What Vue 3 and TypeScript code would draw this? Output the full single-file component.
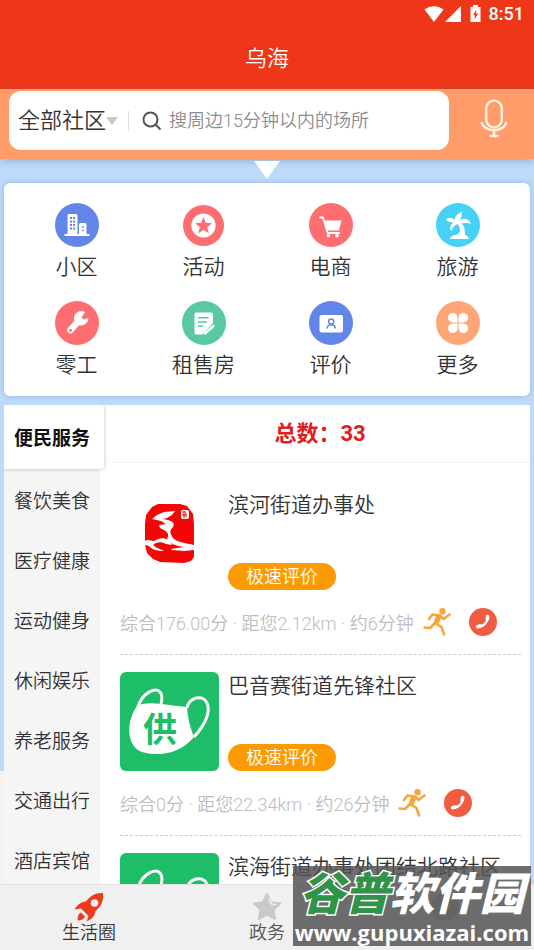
<script setup lang="ts">
interface Service {
  name: string
  icon: string
  color: string
  small?: boolean
}

interface Place {
  name: string
  score: string
  distance: string
  minutes: number
  logo: 'seal' | 'mask'
}

const services: Service[] = [
  { name: '小区', icon: 'building', color: '#6286e8' },
  { name: '活动', icon: 'star', color: '#fe6e71', small: true },
  { name: '电商', icon: 'cart', color: '#fe6e71' },
  { name: '旅游', icon: 'palm', color: '#46d2f6' },
  { name: '零工', icon: 'wrench', color: '#fe6e71' },
  { name: '租售房', icon: 'note', color: '#5ac8a0' },
  { name: '评价', icon: 'card', color: '#6286e8' },
  { name: '更多', icon: 'clover', color: '#fea678' },
]

const categories: string[] = [
  '便民服务', '餐饮美食', '医疗健康', '运动健身', '休闲娱乐', '养老服务', '交通出行', '酒店宾馆',
]

const places: Place[] = [
  { name: '滨河街道办事处', score: '176.00', distance: '2.12', minutes: 6, logo: 'seal' },
  { name: '巴音赛街道先锋社区', score: '0', distance: '22.34', minutes: 26, logo: 'mask' },
  { name: '滨海街道办事处团结北路社区', score: '0', distance: '22.51', minutes: 26, logo: 'mask' },
]
</script>

<template>
  <div class="app">
    <header class="top">
      <div class="status">
        <svg class="wifi" viewBox="0 0 20 16"><path d="M10 16 .5 3.6C6-.9 14-.9 19.500 3.600Z" /></svg>
        <svg class="signal" viewBox="0 0 16 16"><path d="M16 0V16H0Z" /></svg>
        <svg class="battery" viewBox="0 0 11 17">
          <path d="M3 0H8V2H10.500V17H.5V2H3Z" />
          <path d="M6.500 4.500 3 10.200H5L4.500 14.500 8.200 8.500H6Z" fill="#ee3718" />
        </svg>
        <span>8:51</span>
      </div>
      <h1>乌海</h1>
    </header>

    <form class="search-bar" @submit.prevent>
      <div class="search-box">
        <button type="button" class="area">全部社区<i class="caret"></i></button>
        <svg class="lens" viewBox="0 0 20 20"><circle cx="8.500" cy="8.500" r="7" /><path d="m13.500 13.500 5 5" /></svg>
        <input type="search" aria-label="搜索场所" placeholder="搜周边15分钟以内的场所" />
      </div>
      <button type="button" class="voice" aria-label="语音搜索">
        <svg viewBox="0 0 28 40">
          <rect x="6.200" y="1.500" width="15.600" height="27" rx="7.800" />
          <path d="M1.500 23C4 34 24 34 26.500 23M14 31.500V37M9.500 37H18.500" />
        </svg>
      </button>
    </form>

    <main class="content">
      <i class="pointer"></i>

      <nav class="services">
        <a v-for="s in services" :key="s.name" href="#">
          <span class="badge">
            <svg viewBox="0 0 44 44" :class="{ small: s.small }">
              <circle cx="22" cy="22" r="22" :fill="s.color" />
              <g v-if="s.icon === 'building'" fill="#fff">
                <path d="M12.500 12.500Q12.500 11 14 11H21Q22.500 11 22.500 12.500V31H24V21.500Q24 20 25.500 20H30Q31.500 20 31.500 21.500V31H34.500V33H9.500V31H12.500Z" />
                <path d="M15 15h5M15 18.500h5M15 22h5M15 25.500h5" stroke="#6286e8" stroke-width="1.800" stroke-dasharray="2 1" />
                <path d="M26.900 24h1.800M26.900 27.500h1.800" stroke="#6286e8" stroke-width="1.500" />
              </g>
              <g v-else-if="s.icon === 'star'">
                <circle cx="22" cy="22" r="13" fill="#fff" />
                <path d="m22 13 2.500 6.100 6.500.5-5 4.200 1.600 6.400L22 26.700l-5.600 3.500L18 23.800l-5-4.200 6.500-.5Z" :fill="s.color" stroke-linejoin="round" />
              </g>
              <g v-else-if="s.icon === 'cart'">
                <path d="M11 14.500h3l4.700 15.500h11.500" fill="none" stroke="#fff" stroke-width="1.800" stroke-linecap="round" stroke-linejoin="round" />
                <path d="M15 17.500H32.500L30 27.500H18Z" fill="#fff" />
                <circle cx="19.500" cy="32.800" r="1.800" fill="#fff" /><circle cx="28" cy="32.800" r="1.800" fill="#fff" />
              </g>
              <g v-else-if="s.icon === 'palm'" fill="#fff">
                <path d="M20 19C18 16 18 13 26 8.500C26 13 25 16 23 18C28 14 33 16 35 21C31 19.500 28 19.800 25 20.500C28 22 29 25 29 32C31 32.500 32.500 34 33 36H14C14.500 33.500 17 32 20.500 31.800C25 30 25 25 21.500 21C19.500 21.500 17 23.500 15.500 28C13 25 14 22 17.500 20C14 19 12 18.500 9.800 17C12 14 16 14 20 18Z" />
              </g>
              <g v-else-if="s.icon === 'wrench'">
                <path d="m15.500 29 9-10" stroke="#fff" stroke-width="6.500" stroke-linecap="round" />
                <path d="M29.500 11.300A6.800 6.800 0 1 0 33 17.500L28.500 19 25.800 16.600Z" fill="#fff" stroke="#fff" stroke-linejoin="round" />
                <circle cx="15.500" cy="29.200" r="1.500" :fill="s.color" />
              </g>
              <g v-else-if="s.icon === 'note'">
                <path d="M14 11.500H29Q31 11.500 31 13.500V22L20.500 33.500H14Q12.500 33.500 12.500 32V13Q12.500 11.500 14 11.500Z" fill="#fff" />
                <path d="M16 16.800H26.500M16 21H25M16 25.200H21" stroke="#5ac8a0" stroke-width="1.600" />
                <path d="m23 32.500 8.500-7.500" stroke="#fff" stroke-width="2.400" stroke-linecap="round" />
              </g>
              <g v-else-if="s.icon === 'card'">
                <rect x="10.500" y="14" width="23.500" height="17.500" rx="2" fill="#fff" />
                <circle cx="22.200" cy="20.500" r="2.600" fill="none" :stroke="s.color" stroke-width="1.500" />
                <path d="M18 27.500Q18.500 23.800 22.200 23.800Q26 23.800 26.500 27.500" fill="none" :stroke="s.color" stroke-width="1.500" />
              </g>
              <g v-else fill="#fff">
                <path d="M21.500 21.500H16.700A4.800 4.800 0 1 1 21.500 16.700ZM22.500 21.500V16.700A4.800 4.800 0 1 1 27.300 21.500ZM21.500 22.500V27.300A4.800 4.800 0 1 1 16.700 22.500ZM22.500 22.500H27.300A4.800 4.800 0 1 1 22.500 27.300Z" />
              </g>
            </svg>
          </span>
          <span class="name">{{ s.name }}</span>
        </a>
      </nav>

      <section class="directory">
        <nav class="categories">
          <button v-for="(c, i) in categories" :key="c" type="button" :class="{ active: i === 0 }">{{ c }}</button>
        </nav>
        <div class="results">
          <h2>总数：33</h2>
          <ul>
            <li v-for="p in places" :key="p.name">
              <div class="summary">
                <svg v-if="p.logo === 'seal'" class="logo" viewBox="0 0 99 99">
                  <path d="M26 24 32 16 38 13H60L67 15 73 23 74 33V66L71 70 64 72 40 71 33 68 27 62 25 54V33Z" fill="#f30606" />
                  <path d="M32 28 37 24 44 21 55 20 52 24 47 27 43 28C50 29 56 31 53 36C49 40 50 42 53 47C56 51 66 52 74 54V59L64 60 52 59 51 58 64 56C56 55 48 52 47 48C50 43 47 40 40 37L39 34 46 33 41 30Z" fill="#fff" />
                  <path d="M25 50C30 47 32 52 36 49C43 45 49 48 52 54L46 53C41 50 36 51 33 54C36 57 41 58 44 60C38 60 32 59 29 55L25 54Z" fill="#fff" />
                  <path d="M36 54Q41 52 45 55L40 56Z" fill="#f30606" />
                  <rect x="61" y="19" width="8" height="9" rx="2" fill="#fff" />
                  <path d="M62 21h4M64 20v7M62 24h4M66 22v4" stroke="#f30606" stroke-width="1" />
                </svg>
                <svg v-else class="logo" viewBox="0 0 99 99">
                  <rect width="99" height="99" rx="6" fill="#1ebd67" />
                  <path d="M17 34C29 28 48 34 67 35Q68 51 74 65C58 84 35 84 22 80C6 74 6 49 17 34Z" fill="#fff" />
                  <path d="M18 35C22 21 35 15 40 20C43 23 42 28 41 32M67 36C69 25 83 22 87 31C92 43 82 56 74 65" fill="none" stroke="#fff" stroke-width="3" />
                  <text x="40" y="70" text-anchor="middle" class="mask-word">供</text>
                </svg>
                <div class="info">
                  <h3>{{ p.name }}</h3>
                  <button type="button" class="rate">极速评价</button>
                </div>
              </div>
              <div class="meta">
                <span>综合{{ p.score }}分 · 距您{{ p.distance }}km · 约{{ p.minutes }}分钟</span>
                <a href="#" aria-label="路线">
                  <svg viewBox="0 0 28 28">
                    <circle cx="19.500" cy="3.200" r="3.200" fill="#f6a63c" />
                    <path d="M6 11 9.500 6.500 17 7.500 20.500 11 26.500 6.500M15.500 8.500 11.500 15.500 7 20 1.500 19.500M12.500 15.500 18.500 19 21 26.300" fill="none" stroke="#f6a63c" stroke-width="2.600" stroke-linecap="round" stroke-linejoin="round" />
                    <path d="M13 7.500 18.500 9.500 15 17 10.500 15Z" fill="#f6a63c" />
                  </svg>
                </a>
                <a href="#" aria-label="电话">
                  <svg viewBox="0 0 28 28">
                    <circle cx="14" cy="14" r="14" fill="#f05c42" />
                    <path d="M9 19.200C14 18.500 18 15 18.700 9.500" fill="none" stroke="#fff" stroke-width="2.200" />
                    <path d="m8.500 18.700 2.800-.6M18.300 11.200 18.700 8.600" stroke="#fff" stroke-width="3.600" stroke-linecap="round" />
                  </svg>
                </a>
              </div>
            </li>
          </ul>
        </div>
      </section>
    </main>

    <nav class="tabs">
      <a href="#" class="current">
        <svg viewBox="0 0 30 30">
          <path d="M29 1C22 .5 16 4 12 9.500C7 10 3 13 .5 17.500L7 16.500 14.500 24 12.500 29.500C18 27 21 24 21.500 19C27 15 30 8 29 1Z" fill="#ed3b1c" />
          <circle cx="20.500" cy="11" r="3.800" fill="#f0f0f0" />
          <path d="M7 20.500C4 22 4 24.500 3.500 28.500C7 28.500 9.500 27.500 11 24.500Z" fill="#ed3b1c" />
        </svg>
        <span>生活圈</span>
      </a>
      <a href="#">
        <svg viewBox="0 0 30 30">
          <path d="m15 2 4 8.300 9.200 1.200-6.700 6.400 1.700 9.100L15 22.600 6.800 27l1.700-9.100-6.700-6.400 9.200-1.200Z" fill="#c9c9c9" stroke="#c9c9c9" stroke-width="2" stroke-linejoin="round" />
          <path d="m17 7 2.500 5 4 .8" fill="none" stroke="#f0f0f0" stroke-width="1.600" stroke-linecap="round" />
        </svg>
        <span>政务</span>
      </a>
      <a href="#" aria-label="我的">
        <svg viewBox="0 0 30 30"><circle cx="15" cy="15" r="14" fill="#c9c9c9" /></svg>
      </a>
    </nav>

    <aside class="watermark">
      <strong><em>谷普</em>软件园</strong>
      <span>www.gupuxiazai.com</span>
    </aside>
  </div>
</template>

<style>
body {
  margin: 0;
}
</style>

<style scoped>
.app {
  position: relative;
  display: flex;
  flex-direction: column;
  height: 100vh;
  overflow: hidden;
  font-family: Roboto, "Noto Sans CJK SC", sans-serif;
  font-weight: 350;
  color: #333;
}

.app * {
  box-sizing: border-box;
}

svg {
  display: block;
  flex: none;
}

button,
input {
  padding: 0;
  border: 0;
  background: none;
  color: inherit;
  font: inherit;
}

a {
  color: inherit;
  text-decoration: none;
}

h1,
h2,
h3,
ul {
  margin: 0;
  padding: 0;
  font-weight: inherit;
  list-style: none;
}

.top {
  flex: none;
  height: 89px;
  background: #ee3718;
  color: #fff;
}

.status {
  display: flex;
  align-items: center;
  justify-content: flex-end;
  height: 27px;
  padding-right: 10px;
  font-size: 18px;
  font-weight: 500;
}

.status svg {
  fill: #fff;
}

.wifi {
  width: 20px;
  height: 16px;
  margin-right: 1px;
}

.signal {
  width: 16px;
  height: 16px;
  margin-right: 9px;
}

.battery {
  width: 11px;
  height: 17px;
  margin-right: 8px;
}

h1 {
  font-size: 22px;
  line-height: 64px;
  text-align: center;
}

.search-bar {
  position: relative;
  z-index: 1;
  display: flex;
  flex: none;
  height: 70px;
  padding: 2px 0 9px 9px;
  background: #ff9c6a;
  box-shadow: 0 2px 8px rgba(80, 110, 150, 0.4);
}

.search-box {
  display: flex;
  flex: 1;
  align-items: center;
  min-width: 0;
  padding-left: 9px;
  border-radius: 12px;
  background: #fff;
}

.area {
  display: flex;
  align-items: center;
  padding-right: 10px;
  border-right: 1px solid #ddd;
  font-size: 22px;
  line-height: 20px;
}

.caret {
  border: 6px solid transparent;
  border-top: 8px solid #c8c8c8;
  border-bottom: 0;
}

.lens {
  width: 20px;
  height: 20px;
  margin: 0 7px 0 13px;
  fill: none;
  stroke: #555;
  stroke-width: 2;
}

.search-box input {
  flex: 1;
  min-width: 0;
  outline: 0;
  font-size: 18px;
}

.search-box input::placeholder {
  color: #8c8c8c;
  opacity: 1;
}

.voice {
  display: flex;
  justify-content: center;
  width: 85px;
  padding: 8px 0 0 4px;
}

.voice svg {
  width: 28px;
  height: 40px;
  fill: none;
  stroke: #fff0e0;
  stroke-width: 2.500;
}

.content {
  display: flex;
  flex: 1;
  flex-direction: column;
  min-height: 0;
  padding: 2px 4px 0;
  background: linear-gradient(#f4f3f0, #f4f3f0) left bottom / 50% 113px no-repeat, #bedafa;
}

.pointer {
  position: relative;
  z-index: 2;
  flex: none;
  align-self: center;
  margin-bottom: 4px;
  border: 13px solid transparent;
  border-top: 18px solid #fff;
  border-bottom: 0;
}

.services {
  display: grid;
  flex: none;
  grid-template-columns: repeat(4, 1fr);
  grid-auto-rows: 98px;
  padding: 20px 9px 0;
  height: 213px;
  margin-bottom: 9px;
  border-radius: 6px;
  background: #fff;
  box-shadow: 0 0 5px rgba(90, 120, 170, 0.4);
}

.services a {
  display: flex;
  flex-direction: column;
  align-items: center;
}

.badge {
  display: flex;
  align-items: center;
  height: 44px;
}

.badge svg {
  width: 44px;
  height: 44px;
}

.badge svg.small {
  width: 41px;
  height: 41px;
}

.name {
  font-size: 21px;
  line-height: 40px;
}

.directory {
  display: flex;
  flex: 1;
  min-height: 0;
  overflow: hidden;
  background: #fff;
}

.categories {
  display: flex;
  flex: none;
  flex-direction: column;
  width: 96px;
  background: #f5f5f5;
}

.categories button {
  flex: none;
  height: 60px;
  font-size: 19px;
}

.categories .active {
  width: 100px;
  height: 64px;
  padding: 0 4px 2px 0;
  border-radius: 0 3px 3px 0;
  background: #fff;
  box-shadow: 0 0 4px rgba(0, 0, 0, 0.25);
  color: #111;
  font-weight: 700;
}

.results {
  flex: 1;
  min-width: 0;
  padding-left: 10px;
}

h2 {
  height: 58px;
  border-bottom: 1px solid #f2f2f2;
  color: #e01d22;
  font-size: 22px;
  font-weight: 700;
  line-height: 57px;
  text-align: center;
}

ul {
  padding: 11px 9px 0 10px;
}

li {
  padding-top: 17px;
  border-bottom: 1px dashed #ccc;
}

.summary {
  display: flex;
  gap: 9px;
}

.logo {
  width: 99px;
  height: 99px;
}

.mask-word {
  fill: #1ebd67;
  font-size: 34px;
  font-weight: 700;
}

.info {
  display: flex;
  flex: 1;
  flex-direction: column;
  align-items: flex-start;
  justify-content: space-between;
}

h3 {
  font-size: 21px;
  line-height: 28px;
  white-space: nowrap;
}

.rate {
  height: 27px;
  padding: 0 18px;
  border-radius: 14px;
  background: #fc9a04;
  color: #fff;
  font-size: 18px;
  line-height: 27px;
}

.meta {
  display: flex;
  align-items: center;
  height: 64px;
  color: #bdbdbd;
  font-size: 18px;
  white-space: nowrap;
}

.meta svg {
  width: 28px;
  height: 28px;
}

.meta a {
  margin-left: 9px;
}

.meta a + a {
  margin-left: 18px;
}

.tabs {
  display: flex;
  flex: none;
  height: 66px;
  border-top: 1px solid #e2e2e2;
  background: #f0f0f0;
}

.tabs a {
  display: flex;
  flex: 1;
  flex-direction: column;
  align-items: center;
  padding-top: 7px;
  color: #555;
  font-size: 18px;
  line-height: 22px;
}

.tabs .current {
  color: #333;
}

.tabs svg {
  width: 30px;
  height: 30px;
}

.watermark {
  position: absolute;
  right: 3px;
  bottom: 4px;
  z-index: 3;
  display: flex;
  flex-direction: column;
  align-items: center;
  width: 238px;
  height: 80px;
  background: rgba(82, 82, 82, 0.84);
  color: #fff;
  white-space: nowrap;
}

.watermark strong {
  font-size: 45px;
  font-style: italic;
  font-weight: 900;
  line-height: 58px;
}

.watermark em {
  color: #2f9348;
  paint-order: stroke fill;
  -webkit-text-stroke: 3px #fff;
}

.watermark span {
  font-family: "Open Sans", sans-serif;
  font-size: 22px;
  font-weight: 700;
  line-height: 16px;
}
</style>
